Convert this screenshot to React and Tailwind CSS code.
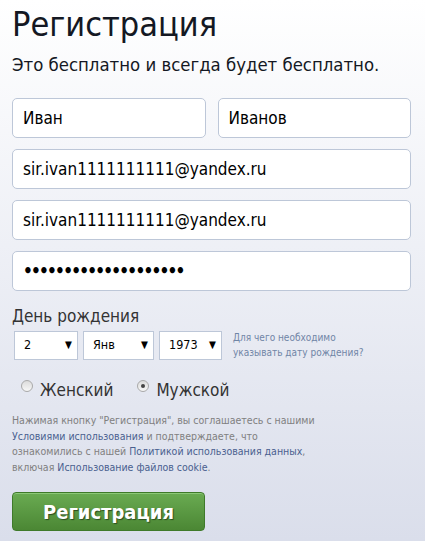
import React from 'react'

const FONT = { fontFamily: '"DejaVu Sans Condensed", "DejaVu Sans", sans-serif' }

function Field({ value, type = 'text' }) {
  const dots = type === 'password'
  return (
    <input
      readOnly
      type={type}
      defaultValue={value}
      className={`h-10 w-full rounded-[5px] border border-[#bdc7d8] bg-white px-[10px] text-[17px] text-black outline-none ${dots ? 'font-bold tracking-[-1.75px]' : ''}`}
      style={FONT}
    />
  )
}

function Select({ value, width }) {
  return (
    <div className={`flex h-[29px] items-center justify-between border border-[#bdc7d8] bg-white pl-[9px] pr-[5px] text-[12.5px] text-black ${width}`}>
      <span>{value}</span>
      <span className="text-[10px] leading-none">▼</span>
    </div>
  )
}

function Radio({ label, checked }) {
  return (
    <div className="flex items-start gap-[7px]">
      <span className="mt-[1px] flex h-3 w-3 items-center justify-center rounded-full border border-[#a9a9a9] bg-gradient-to-b from-[#dcdcdc] to-[#f7f7f7]">
        {checked && <span className="h-[4px] w-[4px] rounded-full bg-[#444]" />}
      </span>
      <span className="text-[17px] leading-[22px] text-[#333]">{label}</span>
    </div>
  )
}

export default function App() {
  return (
    <div className="min-h-[541px] w-[425px] bg-gradient-to-b from-white to-[#dadeeb] pl-3 pt-1" style={FONT}>
      <div className="w-[399px]">
        <h1 className="text-[34px] leading-[40px] text-[#141823]">Регистрация</h1>
        <p className="mt-[9px] text-[18.4px] leading-[24px] text-[#141823]">Это бесплатно и всегда будет бесплатно.</p>

        <div className="mt-[21px] flex flex-col gap-[11px]">
          <div className="grid grid-cols-2 gap-3">
            <Field value="Иван" />
            <Field value="Иванов" />
          </div>
          <Field value="sir.ivan1111111111@yandex.ru" />
          <Field value="sir.ivan1111111111@yandex.ru" />
          <Field value="sir.ivan111111111111" type="password" />
        </div>

        <div className="mt-[15px] text-[17px] leading-[20px] text-[#333]">День рождения</div>
        <div className="ml-[2px] mt-1 flex items-center">
          <div className="flex gap-[5px]">
            <Select value="2" width="w-[64px]" />
            <Select value="Янв" width="w-[71px]" />
            <Select value="1973" width="w-[63px]" />
          </div>
          <div className="ml-[11px] text-[10px] leading-[15px] text-[#7085a6]">
            Для чего необходимо<br />указывать дату рождения?
          </div>
        </div>

        <div className="ml-[9px] mt-[19px] flex gap-6">
          <Radio label="Женский" />
          <Radio label="Мужской" checked />
        </div>

        <div className="mt-3 text-[10.5px] leading-[15.5px] text-[#808080]">
          <div>Нажимая кнопку "Регистрация", вы соглашаетесь с нашими</div>
          <div><span className="text-[#4a5f8f]">Условиями использования</span> и подтверждаете, что</div>
          <div>ознакомились с нашей <span className="text-[#4a5f8f]">Политикой использования данных</span>,</div>
          <div>включая <span className="text-[#4a5f8f]">Использование файлов cookie</span>.</div>
        </div>

        <button
          className="mt-[17px] flex h-[39px] w-[193px] items-center justify-center rounded-[4px] border border-[#3f7a2a] bg-gradient-to-b from-[#6aab52] to-[#4b8734] text-[20px] font-bold text-white shadow-[inset_0_1px_0_#8cc878]"
          style={{ ...FONT, textShadow: '1px 1px 1px #2b4d1f' }}
        >
          Регистрация
        </button>
      </div>
    </div>
  )
}
